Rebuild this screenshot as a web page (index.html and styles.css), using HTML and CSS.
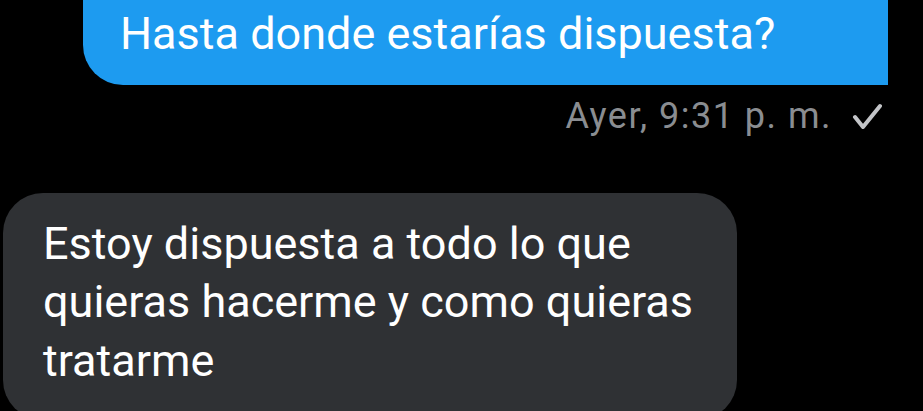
FILE: index.html
```html
<!DOCTYPE html>
<html lang="es">
<head>
    <meta charset="UTF-8">
    <meta name="viewport" content="width=device-width, initial-scale=1.0">
    <title>Mensajes</title>
    <link rel="stylesheet" href="styles.css">
</head>
<body>

    <div class="chat">
        <div class="bubble sent">Hasta donde estarías dispuesta?</div>
        <div class="meta">
            <span class="time">Ayer, 9:31 p. m.</span>
            <svg class="check" width="30" height="28" viewBox="0 0 30 28">
                <path d="M3 14 L11 24 L28 3" fill="none" stroke="#c3c5c8" stroke-width="4" stroke-linecap="round" stroke-linejoin="round"/>
            </svg>
        </div>
        <div class="bubble received">Estoy dispuesta a todo lo que quieras hacerme y como quieras tratarme</div>
    </div>

</body>
</html>
```

FILE: styles.css
```css
body {
    background-color: #000000;
    color: #ffffff;
    font-family: Roboto, "Liberation Sans", Arial, sans-serif;
    margin: 0;
    overflow: hidden;
}
.chat {
    display: flex;
    flex-direction: column;
}
.bubble {
    font-size: 45px;
    line-height: 58.5px;
}
.sent {
    align-self: flex-end;
    background-color: #1d9bf0;
    margin-right: 35px;
    width: 805px;
    box-sizing: border-box;
    padding: 5px 30px 21px 37px;
    border-radius: 0 0 0 40px;
}
.meta {
    display: flex;
    justify-content: flex-end;
    align-items: center;
    height: 40px;
    margin-top: 11px;
    margin-right: 41px;
    gap: 20px;
}
.time {
    font-size: 36px;
    line-height: 40px;
    letter-spacing: 1.5px;
    color: #8a8d91;
}
.check {
    margin-top: 2px;
}
.received {
    align-self: flex-start;
    background-color: #2f3134;
    margin-top: 57px;
    margin-left: 3px;
    width: 734px;
    box-sizing: border-box;
    padding: 22px 30px 30px 40px;
    border-radius: 40px;
}
```
